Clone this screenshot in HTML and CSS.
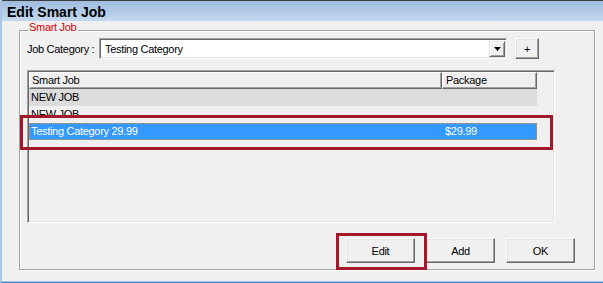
FILE: index.html
```html
<!DOCTYPE html>
<html>
<head>
<meta charset="utf-8">
<title>Edit Smart Job</title>
<link rel="stylesheet" href="styles.css">
</head>
<body>
<div class="window">
  <div class="titlebar">Edit Smart Job</div>
  <div class="client">
    <div class="group">
      <span class="legend">Smart Job</span>
      <div class="cat-row">
        <span class="cat-label">Job Category :</span>
        <div class="combo">
          <span class="combo-text">Testing Category</span>
          <span class="combo-btn"><svg width="7" height="4" viewBox="0 0 7 4"><path d="M0 0H7L3.5 4Z" fill="#000"/></svg></span>
        </div>
        <button class="btn plus">+</button>
      </div>
      <div class="list">
        <div class="list-head">
          <div class="hcell col-name">Smart Job</div>
          <div class="hcell col-pkg">Package</div>
        </div>
        <div class="row alt"><span class="col-name">NEW JOB</span><span class="col-pkg"></span></div>
        <div class="row"><span class="col-name">NEW JOB</span><span class="col-pkg"></span></div>
        <div class="row sel"><span class="col-name">Testing Category 29.99</span><span class="col-pkg">$29.99</span></div>
      </div>
      <div class="actions">
        <button class="btn act">Edit</button>
        <button class="btn act">Add</button>
        <button class="btn act">OK</button>
      </div>
    </div>
  </div>
  <div class="mark mark-row"></div>
  <div class="mark mark-edit"></div>
</div>
</body>
</html>
```

FILE: styles.css
```css
* { box-sizing: border-box; }
html, body { margin: 0; padding: 0; }
body {
  width: 603px;
  height: 283px;
  overflow: hidden;
  background: #f0f0f0;
  font-family: "Liberation Sans", Arial, sans-serif;
  font-size: 11px;
  letter-spacing: -0.3px;
  color: #000;
}
.window {
  position: relative;
  width: 603px;
  height: 283px;
  display: flex;
  flex-direction: column;
  border-left: 2px solid #a9c6e6;
  border-bottom: 1px solid #4f82ba;
}
.titlebar {
  height: 21px;
  flex: none;
  border-top: 1px solid #3c3c3c;
  background: linear-gradient(#9fbde0, #c4d8ee);
  font-size: 14px;
  font-weight: bold;
  letter-spacing: 0;
  line-height: 22px;
  padding-left: 5px;
  overflow: hidden;
}
.client {
  flex: 1;
  padding: 9px 8px 11px 17px;
  border-bottom: 1px solid #9fc8ee;
  background: #f0f0f0;
}
.group {
  position: relative;
  height: 240px;
  border: 1px solid #a0a0a0;
  box-shadow: 1px 1px 0 #fff, inset 1px 1px 0 #fff;
  padding: 7px 19px 0 7px;
}
.legend {
  position: absolute;
  top: -10px;
  left: 8px;
  background: #f0f0f0;
  padding: 0 2px 0 1px;
  line-height: 13px;
  color: #d40000;
}
.cat-row {
  display: flex;
  align-items: center;
  height: 21px;
}
.cat-label {
  width: 72px;
  flex: none;
}
.combo {
  width: 408px;
  height: 21px;
  flex: none;
  display: flex;
  align-items: center;
  background: #fff;
  border: 1px solid;
  border-color: #a0a0a0 #fff #fff #a0a0a0;
  box-shadow: inset 1px 1px 0 #696969, inset -1px -1px 0 #e3e3e3;
  padding-left: 5px;
}
.combo-text { flex: 1; }
.combo-btn {
  width: 16px;
  height: 16px;
  margin-right: 1px;
  display: flex;
  align-items: center;
  justify-content: center;
  background: #f0f0f0;
  border: 1px solid;
  border-color: #e3e3e3 #696969 #696969 #e3e3e3;
  box-shadow: inset 1px 1px 0 #fff, inset -1px -1px 0 #a0a0a0;
}
.btn {
  font: inherit;
  letter-spacing: inherit;
  color: #000;
  padding: 0;
  margin: 0;
  background: #f0f0f0;
  border: 1px solid;
  border-color: #fff #696969 #696969 #fff;
  box-shadow: inset -1px -1px 0 #a0a0a0, inset 1px 1px 0 #e3e3e3;
}
.plus {
  width: 24px;
  height: 21px;
  margin-left: 8px;
}
.list {
  margin-top: 11px;
  width: 528px;
  height: 153px;
  padding: 1px;
  background: #f0f0f0;
  border: 1px solid;
  border-color: #a0a0a0 #fff #fff #a0a0a0;
  box-shadow: inset 1px 1px 0 #696969, inset -1px -1px 0 #e3e3e3;
}
.list-head {
  display: flex;
  height: 17px;
}
.hcell {
  height: 17px;
  line-height: 15px;
  background: #f0f0f0;
  border-top: 1px solid #fff;
  border-left: 1px solid #fff;
  border-right: 1px solid #696969;
  border-bottom: 1px solid #696969;
  box-shadow: inset -1px -1px 0 #a0a0a0;
}
.col-name { width: 413px; flex: none; padding-left: 2px; }
.col-pkg { width: 95px; flex: none; padding-left: 3px; }
.row {
  display: flex;
  width: 508px;
  height: 17px;
  line-height: 17px;
  white-space: nowrap;
}
.row .col-name { padding-left: 2px; }
.row .col-pkg { padding-left: 3px; }
.row.alt { background: #dcdcdc; }
.row.sel {
  background: #3399ff;
  color: #fff;
  border: 1px dotted #e8892e;
  line-height: 15px;
}
.row.sel .col-name { padding-left: 1px; width: 412px; }
.actions {
  display: flex;
  justify-content: flex-end;
  gap: 11px;
  margin-top: 15px;
}
.act {
  width: 69px;
  height: 25px;
}
.mark {
  position: absolute;
  border: 3px solid #a3182a;
}
.mark-row {
  left: 18px;
  top: 115px;
  width: 533px;
  height: 35px;
}
.mark-edit {
  left: 334px;
  top: 233px;
  width: 91px;
  height: 37px;
}
```
